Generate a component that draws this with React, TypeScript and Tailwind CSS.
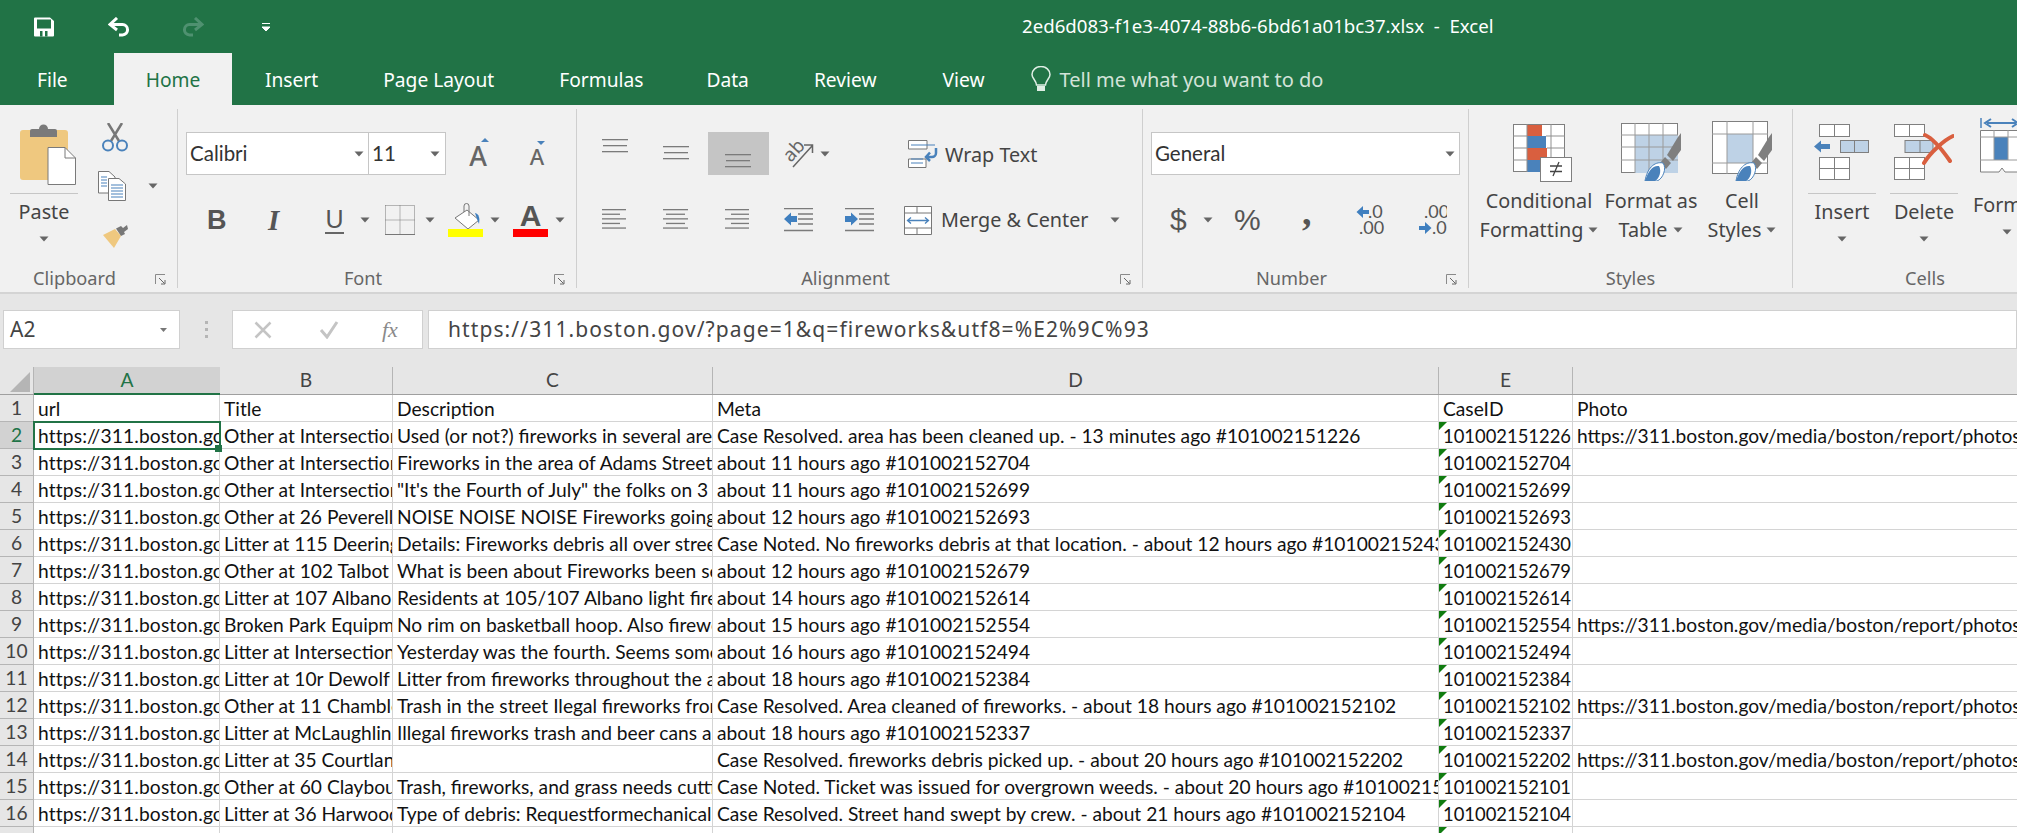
import type { ReactNode } from 'react';

const columns = ['w-[186px]', 'w-[173px]', 'w-[320px]', 'w-[726px]', 'w-[134px]', 'w-[460px]'];
const cellText = ['tracking-[0.15px]', '', '', '', 'text-[18.400px]', ''];

const photo = 'https://311.boston.gov/media/boston/report/photos/5b3d7a1e05bbcb5e2a0d4f6c/report.jpg';
const caseUrl = 'https://311.boston.gov/?page=1&q=fireworks&utf8=%E2%9C%93';

const rows: string[][] = [
  ['url', 'Title', 'Description', 'Meta', 'CaseID', 'Photo'],
  [caseUrl, 'Other at Intersection of Adams St', 'Used (or not?) fireworks in several areas', 'Case Resolved. area has been cleaned up. - 13 minutes ago #101002151226', '101002151226', photo],
  [caseUrl, 'Other at Intersection of Adams St', 'Fireworks in the area of Adams Street and', 'about 11 hours ago #101002152704', '101002152704', ''],
  [caseUrl, 'Other at Intersection of Dorchester', '"It\'s the Fourth of July" the folks on 3 and', 'about 11 hours ago #101002152699', '101002152699', ''],
  [caseUrl, 'Other at 26 Peverell St', 'NOISE NOISE NOISE Fireworks going off', 'about 12 hours ago #101002152693', '101002152693', ''],
  [caseUrl, 'Litter at 115 Deering Rd', 'Details: Fireworks debris all over street', 'Case Noted. No fireworks debris at that location. - about 12 hours ago #101002152430', '101002152430', ''],
  [caseUrl, 'Other at 102 Talbot Ave', 'What is been about Fireworks been set off', 'about 12 hours ago #101002152679', '101002152679', ''],
  [caseUrl, 'Litter at 107 Albano St', 'Residents at 105/107 Albano light fireworks', 'about 14 hours ago #101002152614', '101002152614', ''],
  [caseUrl, 'Broken Park Equipment', 'No rim on basketball hoop. Also fireworks', 'about 15 hours ago #101002152554', '101002152554', photo],
  [caseUrl, 'Litter at Intersection of Dot Ave', 'Yesterday was the fourth. Seems some of', 'about 16 hours ago #101002152494', '101002152494', ''],
  [caseUrl, 'Litter at 10r Dewolf St', 'Litter from fireworks throughout the area', 'about 18 hours ago #101002152384', '101002152384', ''],
  [caseUrl, 'Other at 11 Chamblet St', 'Trash in the street Ilegal fireworks from', 'Case Resolved. Area cleaned of fireworks. - about 18 hours ago #101002152102', '101002152102', photo],
  [caseUrl, 'Litter at McLaughlin Park', 'Illegal fireworks trash and beer cans all', 'about 18 hours ago #101002152337', '101002152337', ''],
  [caseUrl, 'Litter at 35 Courtland St', '', 'Case Resolved. fireworks debris picked up. - about 20 hours ago #101002152202', '101002152202', photo],
  [caseUrl, 'Other at 60 Claybourne St', 'Trash, fireworks, and grass needs cutting', 'Case Noted. Ticket was issued for overgrown weeds. - about 20 hours ago #101002152101', '101002152101', ''],
  [caseUrl, 'Litter at 36 Harwood St', 'Type of debris: Requestformechanical sweep', 'Case Resolved. Street hand swept by crew. - about 21 hours ago #101002152104', '101002152104', ''],
  ['', '', '', '', '', ''],
];

function Caret({ className = '' }: { className?: string }) {
  return (
    <svg width="10" height="6" viewBox="0 0 10 6" className={`shrink-0 ${className}`}>
      <path d="M0.5 0.5H9.5L5 5.5Z" fill="#666" />
    </svg>
  );
}

function Launcher() {
  return (
    <svg width="11" height="11" viewBox="0 0 11 11">
      <path d="M10 .5H.5V10" fill="none" stroke="#8a8a8a" />
      <path d="M4 4 9.5 9.5M10 6V10H6" fill="none" stroke="#666" />
    </svg>
  );
}

function Group({ label, className, launcher = true, children }: { label: string; className: string; launcher?: boolean; children: ReactNode }) {
  return (
    <div className={`h-[179px] shrink-0 flex flex-col border-r border-[#cfcfcf] ${className}`}>
      <div className="h-[155px]">{children}</div>
      <div className="h-[24px] flex items-center text-[18.2px] text-[#666] pt-[6px]">
        <div className="flex-1 text-center">{label}</div>
        {launcher && (
          <div className="w-[28px] pr-[11px] flex justify-end">
            <Launcher />
          </div>
        )}
      </div>
    </div>
  );
}

function Lines({ top, rows }: { top: number; rows: [number, number][] }) {
  return (
    <svg width="27" height="43" viewBox="0 0 27 43" className="shrink-0">
      {rows.map(([x, w], i) => (
        <rect key={i} x={x} y={top + i * (rows.length > 3 ? 4.6 : 6)} width={w} height="1.3" fill="#7b7b7b" />
      ))}
    </svg>
  );
}

const threeLines: [number, number][] = [[0, 26], [1, 24], [0, 26]];

function SaveIcon() {
  return (
    <svg width="20" height="20" viewBox="0 0 20 20">
      <path d="M0 1.5A1 1 0 0 1 1 .5H16L20 4V18.5A1 1 0 0 1 19 19.5H1A1 1 0 0 1 0 18.5Z" fill="#fff" />
      <rect x="3" y="2.5" width="14" height="9" fill="#217346" />
      <rect x="6" y="14" width="2.5" height="5.5" fill="#217346" />
      <rect x="11" y="14" width="2.5" height="5.5" fill="#217346" />
    </svg>
  );
}

function ArrowBack({ color, flip = false }: { color: string; flip?: boolean }) {
  return (
    <svg width="22" height="20" viewBox="0 0 22 20" className={flip ? '-scale-x-100' : ''}>
      <path d="M9 1 2 7.5 9 13M2 7.5H14.5A5 5 0 0 1 19.5 12.500A5 5 0 0 1 14.500 18H11" fill="none" stroke={color} strokeWidth="3" />
    </svg>
  );
}

function PasteIcon() {
  return (
    <svg width="56" height="61" viewBox="0 0 56 61">
      <rect x="0" y="6" width="48" height="50" rx="3" fill="#efc87f" />
      <path d="M10 13V7A2 2 0 0 1 12 5H19A4.500 4.500 0 0 1 28 5H35A2 2 0 0 1 37 7V13Z" fill="#7a7a7a" />
      <path d="M28 23.500H45L55.500 34V60.500H28Z" fill="#fff" stroke="#7a7a7a" />
      <path d="M45 23.500V34H55.500" fill="none" stroke="#7a7a7a" />
    </svg>
  );
}

function CutIcon() {
  return (
    <svg width="26" height="29" viewBox="0 0 26 29">
      <path d="M6 0 17 18M20 0 9 18" stroke="#777" strokeWidth="2.500" fill="none" />
      <circle cx="6" cy="22.500" r="5" fill="none" stroke="#4a82bb" strokeWidth="2" />
      <circle cx="20" cy="22.500" r="5" fill="none" stroke="#4a82bb" strokeWidth="2" />
    </svg>
  );
}

function CopyIcon() {
  return (
    <svg width="28" height="30" viewBox="0 0 28 30">
      <path d="M.5.5H11L17 6V22H.5Z" fill="#fff" stroke="#777" />
      <path d="M10.500 7.500H21L27.500 13V29.500H10.500Z" fill="#fff" stroke="#777" />
      <path d="M3 6H9M3 9H9M3 12H9M3 15H9M13 14H25M13 17H25M13 20H25M13 23H25M13 26H25" stroke="#4a82bb" strokeWidth="1.200" />
    </svg>
  );
}

function PainterIcon() {
  return (
    <svg width="25" height="23" viewBox="0 0 25 23">
      <path d="M0 10 12 4 18 11 11 23Z" fill="#efc87f" />
      <path d="M13 3.500 18 1 20 3 24 0 25 4 21 7 22 9 18 11Z" fill="#777" />
    </svg>
  );
}

function IncreaseFontIcon({ big }: { big: boolean }) {
  return (
    <div className={`flex flex-col items-end ${big ? 'w-[22px]' : 'w-[16px]'}`}>
      {big ? (
        <svg width="8" height="4" viewBox="0 0 8 4">
          <path d="M0 4 4 0 8 4Z" fill="#4a82bb" />
        </svg>
      ) : (
        <svg width="8" height="4" viewBox="0 0 8 4">
          <path d="M0 0 4 4 8 0Z" fill="#4a82bb" />
        </svg>
      )}
      <span className={`self-center leading-none font-medium text-[#666] ${big ? 'text-[27px]' : 'text-[22px]'}`}>A</span>
    </div>
  );
}

function BorderIcon() {
  return (
    <svg width="30" height="30" viewBox="0 0 30 30">
      <path d="M.5.5H29.500V29M.5.5V29M15 .5V29M.5 15H29.500" fill="none" stroke="#777" strokeDasharray="1 1" />
      <path d="M0 29.500H30" stroke="#777" />
    </svg>
  );
}

function FillIcon() {
  return (
    <div className="w-[35px] flex flex-col items-center">
      <svg width="30" height="26" viewBox="0 0 30 26">
        <path d="M16 7 28 17 17 26 4 15Z" fill="#fff" stroke="#777" />
        <path d="M13 9V3A2.500 2.500 0 0 1 18 3V13" fill="none" stroke="#777" />
        <path d="M24 10C28 11 29 15 28 21L26 16Z" fill="#3f7fbf" />
      </svg>
      <div className="w-[35px] h-[8px] bg-[#ffff00]" />
    </div>
  );
}

function OrientationIcon() {
  return (
    <svg width="30" height="28" viewBox="0 0 30 28">
      <text x="2" y="18" fontSize="19" fill="#666" transform="rotate(-47 10 15)" fontFamily="Noto Sans">ab</text>
      <path d="M9 27 28 6M20 5H28.500V13" fill="none" stroke="#666" strokeWidth="1.500" />
    </svg>
  );
}

function WrapIcon() {
  return (
    <svg width="30" height="28" viewBox="0 0 30 28">
      <path d="M.5.5H19V9H.5ZM.5 19H18V27.500H.5Z" fill="#fff" stroke="#777" />
      <path d="M3 5H27M3 23H15M3 19H15" stroke="#4a82bb" strokeWidth="1.200" />
      <path d="M28 8V13A4 4 0 0 1 24 17H19M22 12.500 18 17 22 21" fill="none" stroke="#4a82bb" strokeWidth="2.500" />
    </svg>
  );
}

function MergeIcon() {
  return (
    <svg width="28" height="29" viewBox="0 0 28 29">
      <path d="M.5.5H27.500V28.500H.5ZM.5 7H27.500M.5 22H27.500M13 .5V7M13 22V28.500" fill="#fff" stroke="#777" />
      <path d="M4 14.500H24M7 11.500 3.500 14.500 7 17.500M21 11.500 24.500 14.500 21 17.500" fill="none" stroke="#4a82bb" strokeWidth="1.300" />
    </svg>
  );
}

function IndentIcon({ increase }: { increase: boolean }) {
  return (
    <svg width="29" height="24" viewBox="0 0 29 24">
      <path d="M0 .5H29M14 6H29M14 11H29M14 16H29M0 22.500H29" stroke="#7b7b7b" strokeWidth="1.300" />
      {increase ? (
        <path d="M0 8H6V4.500L13 11 6 17.500V14H0Z" fill="#3f7fbf" />
      ) : (
        <path d="M13 8H7V4.500L0 11 7 17.500V14H13Z" fill="#3f7fbf" />
      )}
    </svg>
  );
}

function DecimalIcon({ increase }: { increase: boolean }) {
  return (
    <svg width="30" height="30" viewBox="0 0 30 30">
      <text x={increase ? 7 : 12} y="13" fontSize="18" fill="#555" fontFamily="Lato">{increase ? '.00' : '.0'}</text>
      <text x={increase ? 15 : 3} y="29" fontSize="18" fill="#555" fontFamily="Lato">{increase ? '.0' : '.00'}</text>
      {increase ? (
        <path d="M2 21H8V17L14.500 23 8 29V25H2Z" fill="#3f7fbf" />
      ) : (
        <path d="M13 5H7V1L.5 7 7 13V9H13Z" fill="#3f7fbf" />
      )}
    </svg>
  );
}

function Brush() {
  return (
    <>
      <path d="M57 14 60 10V27L52 38 46 32Z" fill="#7f7f7f" />
      <path d="M44 34 50 40 45 46 39 40Z" fill="#7f7f7f" />
      <path d="M24 58C26 46 33 38 42 40C46 45 42 56 36 58Z" fill="#fff" stroke="#4a82bb" />
      <path d="M24 58C27 48 32 42 38 43C41 48 38 56 34 58Z" fill="#4a82bb" />
    </>
  );
}

function ConditionalIcon() {
  return (
    <svg width="59" height="58" viewBox="0 0 59 58">
      <rect x=".5" y=".5" width="51" height="47" fill="#fff" stroke="#7f7f7f" />
      <rect x="14" y="1" width="15" height="11" fill="#d95f3f" />
      <rect x="14" y="12" width="19" height="12" fill="#4a82bb" />
      <rect x="14" y="24" width="20" height="12" fill="#d95f3f" />
      <rect x="14" y="36" width="13" height="12" fill="#4a82bb" />
      <path d="M14 0V48M38 0V48M0 12H14M0 24H14M0 36H14M33 12H52M34 24H52" stroke="#8f8f8f" fill="none" />
      <rect x="27.500" y="33.500" width="31" height="24" fill="#fff" stroke="#7f7f7f" />
      <path d="M37 42H49M37 47.500H49M46 38 40 52" stroke="#444" strokeWidth="1.300" fill="none" />
    </svg>
  );
}

function TableIcon() {
  return (
    <svg width="61" height="58" viewBox="0 0 61 58">
      <rect x=".5" y=".5" width="56" height="49" fill="#fff" stroke="#7f7f7f" />
      <rect x="14" y="12" width="43" height="38" fill="#bed2e6" />
      <path d="M14 0V50M28 0V50M42 0V50M0 12H57M0 24H57M0 37H57" stroke="#9a9a9a" fill="none" />
      <Brush />
    </svg>
  );
}

function CellStyleIcon() {
  return (
    <svg width="61" height="60" viewBox="0 0 61 60">
      <rect x=".5" y=".5" width="55" height="52" fill="#fff" stroke="#7f7f7f" />
      <rect x="15" y="13" width="26" height="29" fill="#bed2e6" />
      <path d="M15 0V53M41 0V53M0 13H56M0 42H56" stroke="#9a9a9a" fill="none" />
      <g transform="translate(0 2)">
        <Brush />
      </g>
    </svg>
  );
}

function MiniGrid({ x, y, w, h, rows = 1 }: { x: number; y: number; w: number; h: number; rows?: number }) {
  return (
    <>
      <rect x={x + 0.5} y={y + 0.5} width={w} height={h} fill="#fff" stroke="#7f7f7f" />
      <path d={`M${x + w / 2 + 0.5} ${y}V${y + h}`} stroke="#7f7f7f" />
      {rows > 1 && <path d={`M${x} ${y + h / 2 + 0.5}H${x + w}`} stroke="#7f7f7f" />}
    </>
  );
}

function InsertCellsIcon() {
  return (
    <svg width="57" height="56" viewBox="0 0 57 56">
      <MiniGrid x={5} y={0} w={30} h={12} />
      <MiniGrid x={5} y={33} w={30} h={22} rows={2} />
      <rect x="26.500" y="16.500" width="28" height="12" fill="#bed2e6" stroke="#7f7f7f" />
      <path d="M40.500 16V29" stroke="#7f7f7f" />
      <path d="M16 20H7V16.500L0 22.500 7 28.500V25H16Z" fill="#4a82bb" />
    </svg>
  );
}

function DeleteCellsIcon() {
  return (
    <svg width="60" height="56" viewBox="0 0 60 56">
      <MiniGrid x={0} y={0} w={30} h={12} />
      <MiniGrid x={0} y={33} w={30} h={22} rows={2} />
      <rect x="11" y="16.500" width="28" height="12" fill="#bed2e6" stroke="#7f7f7f" />
      <path d="M26 16V29" stroke="#7f7f7f" />
      <path d="M31 11C38 14 47 24 56 37M59 12C50 16 36 29 30 39" fill="none" stroke="#d95f3f" strokeWidth="4" strokeLinecap="round" />
    </svg>
  );
}

function FormatCellsIcon() {
  return (
    <svg width="50" height="62" viewBox="0 0 50 62">
      <path d="M1 0V10" stroke="#4a82bb" strokeWidth="1.500" />
      <path d="M7 5H36M11 1 5 5 11 9M32 1 38 5 32 9" stroke="#4a82bb" strokeWidth="2" fill="none" />
      <path d="M.5 12.500H45.500V54H25L22 50 19 54H.5Z" fill="#fff" stroke="#7f7f7f" />
      <rect x="14" y="19" width="14" height="23" fill="#4a82bb" />
      <path d="M14 12V42M28 12V42M0 19H45M0 42H45" stroke="#9a9a9a" fill="none" />
    </svg>
  );
}

function Cell({ text, className, textClass, column, selected }: { text: string; className: string; textClass: string; column: number; selected: boolean }) {
  return (
    <div className={`relative h-[27px] shrink-0 ${className}`}>
      <div className={`h-full border-r border-[#d4d4d4] pl-[4px] overflow-hidden whitespace-nowrap leading-[28px] ${textClass}`}>{text}</div>
      {column === 4 && <div className="absolute left-0 top-0 w-[8px] h-[8px] bg-[#107c10] [clip-path:polygon(0_0,100%_0,0_100%)]" />}
      {selected && (
        <>
          <div className="absolute -inset-x-px -top-px -bottom-px border-2 border-[#217346]" />
          <div className="absolute z-10 -right-[2px] -bottom-[3px] w-[7px] h-[7px] bg-[#217346]" />
        </>
      )}
    </div>
  );
}

export default function App() {
  return (
    <div className="w-[2017px] h-[833px] overflow-hidden flex flex-col bg-[#e6e6e6] [font-family:'Noto_Sans',sans-serif] text-[#444]">
      {/* title bar */}
      <div className="h-[53px] shrink-0 bg-[#217346] flex items-center pl-[34px]">
        <SaveIcon />
        <div className="ml-[54px]">
          <ArrowBack color="#fff" />
        </div>
        <div className="ml-[52px]">
          <ArrowBack color="#4f9170" flip />
        </div>
        <svg width="8" height="8" viewBox="0 0 8 8" className="ml-[58px]">
          <path d="M0 .5H8M0 4H8L4 8Z" stroke="#fff" fill="#fff" />
        </svg>
        <div className="ml-[752px] pb-[2px] text-white text-[18.650px] whitespace-pre">2ed6d083-f1e3-4074-88b6-6bd61a01bc37.xlsx  -  Excel</div>
      </div>

      {/* tabs */}
      <div className="h-[52px] shrink-0 bg-[#217346] flex items-center text-white text-[19.200px]">
        <div className="w-[114px] pl-[37px] pt-[2px]">File</div>
        <div className="w-[118px] h-full pt-[2px] bg-[#f1f1f1] text-[#217346] flex items-center justify-center">Home</div>
        <div className="ml-[33px] pt-[2px]">Insert</div>
        <div className="ml-[65px] pt-[2px]">Page Layout</div>
        <div className="ml-[65px] pt-[2px]">Formulas</div>
        <div className="ml-[63px] pt-[2px]">Data</div>
        <div className="ml-[65px] pt-[2px]">Review</div>
        <div className="ml-[66px] pt-[2px]">View</div>
        <svg width="20" height="27" viewBox="0 0 20 27" className="ml-[47px]">
          <path d="M5.500 19C5 14 1 12.500 1 8.500A9 8 0 0 1 19 8.500C19 12.500 15 14 14.500 19Z" fill="none" stroke="#dfeee5" strokeWidth="1.500" />
          <rect x="6" y="20" width="8" height="5" fill="#dfeee5" />
        </svg>
        <div className="ml-[8px] pt-[2px] text-[#d3e3d9] text-[20px]">Tell me what you want to do</div>
      </div>

      {/* ribbon */}
      <div className="h-[189px] shrink-0 bg-[#f1f1f1] border-b-2 border-[#d4d4d4] pt-[4px] flex text-[19.800px] overflow-hidden">
        <Group label="Clipboard" className="w-[178px]">
          <div className="flex pl-[10px]">
            <div className="w-[68px] flex flex-col items-center pt-[15px]">
              <div className="pl-[10px] w-full">
                <PasteIcon />
              </div>
              <div className="w-full mt-[8px] h-[37px] border-t border-[#c6c6c6] flex items-center justify-center">Paste</div>
              <Caret className="mt-[6px]" />
            </div>
            <div className="ml-[20px] flex flex-col pt-[14px]">
              <div className="ml-[4px] h-[29px]">
                <CutIcon />
              </div>
              <div className="mt-[19px] flex items-center">
                <CopyIcon />
                <Caret className="ml-[22px]" />
              </div>
              <div className="mt-[24px] ml-[5px]">
                <PainterIcon />
              </div>
            </div>
          </div>
        </Group>

        <Group label="Font" className="w-[399px]">
          <div className="pl-[8px] pt-[23px]">
            <div className="flex items-center h-[43px] text-[20.500px]">
              <div className="w-[183px] h-full bg-white border border-[#c6c6c6] flex items-center justify-between pl-[3px] pr-[4px] [font-family:Lato,sans-serif] text-[#333]">
                Calibri
                <Caret />
              </div>
              <div className="w-[78px] -ml-px h-full bg-white border border-[#c6c6c6] flex items-center justify-between pl-[3px] pr-[5px] [font-family:Lato,sans-serif] text-[#333]">
                11
                <Caret />
              </div>
              <div className="ml-[21px]">
                <IncreaseFontIcon big />
              </div>
              <div className="ml-[40px]">
                <IncreaseFontIcon big={false} />
              </div>
            </div>
            <div className="flex items-center h-[34px] mt-[28px] text-[#555]">
              <div className="ml-[21px] w-[17px] text-[27px] font-bold [font-family:'Liberation_Sans',sans-serif] leading-none">B</div>
              <div className="ml-[44px] w-[16px] text-[29px] font-bold italic [font-family:'Liberation_Serif',serif] leading-none">I</div>
              <div className="ml-[41px] w-[19px] text-[25px] [font-family:'Liberation_Sans',sans-serif] leading-[26px] border-b-2 border-[#666] flex justify-center h-[28px]">U</div>
              <Caret className="ml-[16px]" />
              <div className="ml-[15px]">
                <BorderIcon />
              </div>
              <Caret className="ml-[10px]" />
              <div className="ml-[13px]">
                <FillIcon />
              </div>
              <Caret className="ml-[7px]" />
              <div className="ml-[13px] w-[35px] flex flex-col items-center">
                <span className="text-[30px] leading-[26px] h-[26px] font-semibold [font-family:'Liberation_Sans',sans-serif]">A</span>
                <div className="w-[35px] h-[8px] bg-[#ff0000]" />
              </div>
              <Caret className="ml-[7px]" />
            </div>
          </div>
        </Group>

        <Group label="Alignment" className="w-[566px]">
          <div className="pl-[25px] pt-[23px]">
            <div className="flex items-center h-[43px]">
              <Lines top={7} rows={threeLines} />
              <div className="ml-[34px]">
                <Lines top={14} rows={threeLines} />
              </div>
              <div className="ml-[18px] w-[61px] h-[43px] bg-[#c5c5c5] flex justify-center">
                <Lines top={22} rows={threeLines} />
              </div>
              <div className="ml-[15px]">
                <OrientationIcon />
              </div>
              <Caret className="ml-[6px]" />
              <div className="ml-[78px]">
                <WrapIcon />
              </div>
              <div className="ml-[7px] pt-[2px]">Wrap Text</div>
            </div>
            <div className="flex items-center h-[30px] mt-[30px]">
              <div className="w-[27px] h-[24px]">
                <Lines top={1} rows={[[0, 24], [0, 18], [0, 24], [0, 18], [0, 24]]} />
              </div>
              <div className="ml-[34px] w-[27px] h-[24px]">
                <Lines top={1} rows={[[0, 25], [3, 19], [0, 25], [3, 19], [0, 25]]} />
              </div>
              <div className="ml-[35px] w-[27px] h-[24px]">
                <Lines top={1} rows={[[0, 24], [6, 18], [0, 24], [6, 18], [0, 24]]} />
              </div>
              <div className="ml-[32px]">
                <IndentIcon increase={false} />
              </div>
              <div className="ml-[32px]">
                <IndentIcon increase />
              </div>
              <div className="ml-[30px]">
                <MergeIcon />
              </div>
              <div className="ml-[9px] whitespace-nowrap">Merge &amp; Center</div>
              <Caret className="ml-[21px]" />
            </div>
          </div>
        </Group>

        <Group label="Number" className="w-[326px]">
          <div className="pl-[8px] pt-[23px]">
            <div className="w-[309px] h-[43px] bg-white border border-[#c6c6c6] flex items-center justify-between pl-[3px] pr-[4px] text-[20.500px] [font-family:Lato,sans-serif] text-[#333]">
              General
              <Caret />
            </div>
            <div className="flex items-center h-[34px] mt-[28px] text-[#555]">
              <div className="ml-[19px] w-[17px] text-[30px] leading-none [font-family:'Liberation_Sans',sans-serif]">$</div>
              <Caret className="ml-[16px]" />
              <div className="ml-[21px] w-[26px] text-[30px] leading-none tracking-[-3px] [font-family:'Liberation_Sans',sans-serif]">%</div>
              <div className="ml-[42px] w-[13px] h-[34px] text-[38px] leading-[18px] font-bold [font-family:'Liberation_Serif',serif]">,</div>
              <div className="ml-[41px]">
                <DecimalIcon increase={false} />
              </div>
              <div className="ml-[31px]">
                <DecimalIcon increase />
              </div>
            </div>
          </div>
        </Group>

        <Group label="Styles" className="w-[324px]" launcher={false}>
          <div className="flex pl-[12px] pt-[12px]">
            <div className="w-[116px] flex flex-col items-center">
              <div className="h-[60px] pt-[3px] pl-[7px]">
                <ConditionalIcon />
              </div>
              <div className="mt-[5px] leading-[29px]">Conditional</div>
              <div className="leading-[29px] flex items-center whitespace-nowrap">
                Formatting
                <Caret className="ml-[5px]" />
              </div>
            </div>
            <div className="ml-[9px] w-[90px] flex flex-col items-center">
              <div className="h-[60px] pt-[2px]">
                <TableIcon />
              </div>
              <div className="mt-[5px] leading-[29px] whitespace-nowrap">Format as</div>
              <div className="leading-[29px] flex items-center">
                Table
                <Caret className="ml-[6px]" />
              </div>
            </div>
            <div className="ml-[12px] w-[68px] flex flex-col items-center">
              <CellStyleIcon />
              <div className="mt-[5px] leading-[29px]">Cell</div>
              <div className="leading-[29px] flex items-center">
                Styles
                <Caret className="ml-[5px]" />
              </div>
            </div>
          </div>
        </Group>

        <div className="h-[179px] w-[300px] shrink-0 flex flex-col">
          <div className="h-[155px] flex pl-[15px] pt-[15px]">
            <div className="w-[68px] flex flex-col items-center">
              <div className="h-[60px]">
                <InsertCellsIcon />
              </div>
              <div className="w-full mt-[9px] h-[37px] border-t border-[#c6c6c6] flex items-center justify-center">Insert</div>
              <Caret className="mt-[6px]" />
            </div>
            <div className="ml-[14px] w-[68px] flex flex-col items-center">
              <div className="h-[60px]">
                <DeleteCellsIcon />
              </div>
              <div className="w-full mt-[9px] h-[37px] border-t border-[#c6c6c6] flex items-center justify-center">Delete</div>
              <Caret className="mt-[6px]" />
            </div>
            <div className="ml-[17px] w-[63px] flex flex-col items-center">
              <div className="h-[62px] self-start pl-[5px] -mt-[6px]">
                <FormatCellsIcon />
              </div>
              <div className="mt-[10px] leading-[29px]">Format</div>
              <Caret className="mt-[10px]" />
            </div>
          </div>
          <div className="h-[24px] flex items-center pt-[6px] text-[18.200px] text-[#666] pl-[112px]">Cells</div>
        </div>
      </div>

      {/* formula bar */}
      <div className="h-[73px] shrink-0 pt-[16px] flex items-start">
        <div className="ml-[3px] w-[177px] h-[39px] bg-white border border-[#d0d0d0] flex items-center justify-between pl-[6px] pr-[12px] text-[21px]">
          A2
          <svg width="7" height="4" viewBox="0 0 7 4">
            <path d="M0 0H7L3.500 4Z" fill="#777" />
          </svg>
        </div>
        <div className="w-[52px] h-[39px] flex flex-col items-center justify-center gap-[4px]">
          <div className="w-[3px] h-[3px] bg-[#b5b5b5]" />
          <div className="w-[3px] h-[3px] bg-[#b5b5b5]" />
          <div className="w-[3px] h-[3px] bg-[#b5b5b5]" />
        </div>
        <div className="w-[191px] h-[39px] bg-white border border-[#d0d0d0] flex items-center pl-[21px]">
          <svg width="18" height="18" viewBox="0 0 18 18">
            <path d="M1.500 1.500 16.500 16.500M16.500 1.500 1.500 16.500" stroke="#c4c4c4" strokeWidth="2.500" />
          </svg>
          <svg width="20" height="18" viewBox="0 0 20 18" className="ml-[47px]">
            <path d="M2 9 8 16 18 1" fill="none" stroke="#c4c4c4" strokeWidth="3" />
          </svg>
          <span className="ml-[43px] text-[22px] italic text-[#8a8a8a] [font-family:'Liberation_Serif',serif]">fx</span>
        </div>
        <div className="ml-[5px] flex-1 h-[39px] bg-white border border-[#d0d0d0] flex items-center pl-[19px] text-[21px] tracking-[1.100px]">{caseUrl}</div>
      </div>

      {/* column headers */}
      <div className="h-[28px] shrink-0 flex border-b border-[#9f9f9f] text-[19.200px] [font-family:Lato,sans-serif]">
        <div className="w-[34px] shrink-0 border-r border-[#b5b5b5] flex items-end justify-end pr-[3px] pb-[2px]">
          <div className="w-[20px] h-[20px] bg-[#b5b5b5] [clip-path:polygon(100%_0,100%_100%,0_100%)]" />
        </div>
        <div className={`${columns[0]} shrink-0 bg-[#d2d2d2] text-[#217346] border-b-2 border-[#217346] h-[28px] flex items-center justify-center`}>A</div>
        {['B', 'C', 'D', 'E'].map((letter, i) => (
          <div key={letter} className={`${columns[i + 1]} shrink-0 border-l-0 border-r border-[#b5b5b5] flex items-center justify-center`}>
            {letter}
          </div>
        ))}
      </div>

      {/* sheet */}
      <div className="flex-1 flex flex-col bg-white text-[#111] text-[19.200px] [font-family:Lato,sans-serif]">
        {rows.map((row, rowIndex) => (
          <div key={rowIndex} className="flex h-[27px] shrink-0 border-b border-[#d4d4d4]">
            <div
              className={`w-[34px] shrink-0 h-[27px] border-r border-b border-[#b5b5b5] flex items-center justify-center ${
                rowIndex === 1 ? 'bg-[#d2d2d2] text-[#217346]' : 'bg-[#e6e6e6] text-[#444]'
              }`}
            >
              {rowIndex + 1}
            </div>
            {row.map((text, column) => (
              <Cell
                key={column}
                text={text}
                column={rowIndex > 0 ? column : -1}
                className={columns[column]}
                textClass={rowIndex > 0 ? cellText[column] : ''}
                selected={rowIndex === 1 && column === 0}
              />
            ))}
          </div>
        ))}
      </div>
    </div>
  );
}
